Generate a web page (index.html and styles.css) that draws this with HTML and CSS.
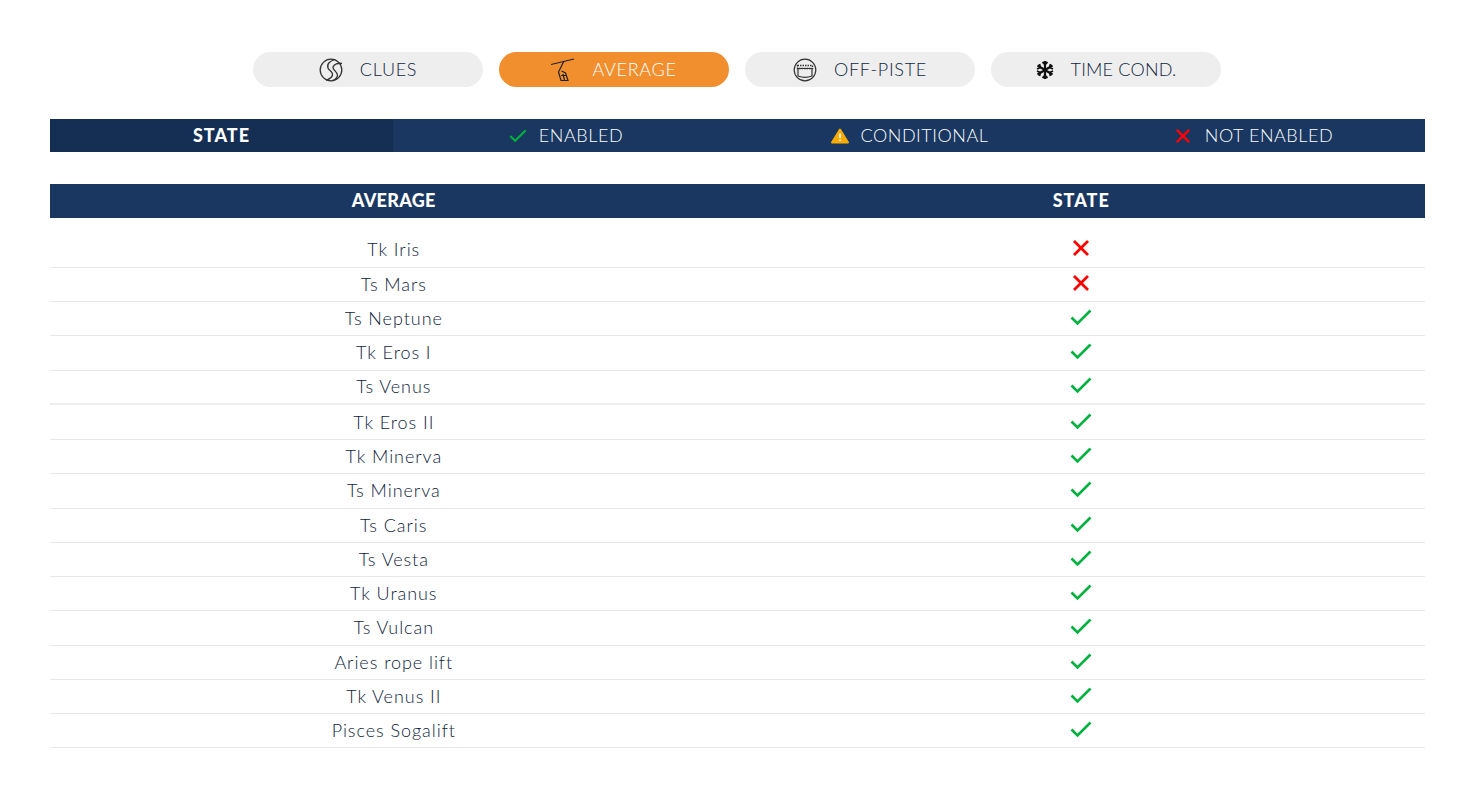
FILE: index.html
```html
<!DOCTYPE html>
<html lang="en">
<head>
<meta charset="utf-8">
<title>Slopes state</title>
<link rel="stylesheet" href="styles.css">
</head>
<body>
<svg class="defs" width="0" height="0" aria-hidden="true">
  <symbol id="check" viewBox="0 0 22 18"><path d="M1.5 9.5 7.5 15.5 20.5 2.5" fill="none" stroke="currentColor" stroke-width="2.6"/></symbol>
  <symbol id="cross" viewBox="0 0 18 18"><path d="M2 2 16 16M16 2 2 16" fill="none" stroke="currentColor" stroke-width="2.8"/></symbol>
</svg>
<nav class="tabs">
  <a class="tab"><svg class="tab-icon" viewBox="0 0 24 24"><circle cx="12" cy="12" r="10.8" fill="none" stroke="#333" stroke-width="1.3"/><path d="M16 1.500C11 3 7.500 6 9 10c1.200 3 4 3 4.500 6 .5 3-3 5-6.500 6.500M23 5.500c-4-.8-8 .5-9 3.500-.8 2.500 4.500 5 4.500 8 0 2-1.500 4-4 5.500" fill="none" stroke="#333" stroke-width="1.300"/></svg><span>CLUES</span></a>
  <a class="tab active"><svg class="tab-icon" viewBox="0 0 24 24"><path d="M0 6.500 23 1" stroke="#222" stroke-width="1.100"/><path d="M13 3 9 11 7.500 14 10 22.500h7L14.500 15 10.500 13M10 17.500h5.500M12 16l1.500 6" fill="none" stroke="#222" stroke-width="1.200"/></svg><span>AVERAGE</span></a>
  <a class="tab"><svg class="tab-icon" viewBox="0 0 24 24"><circle cx="12" cy="12" r="10.800" fill="none" stroke="#333" stroke-width="1.200"/><path d="M4.500 10.500h15M5 10.500v7.500c4 1.500 10 1.500 14 0v-7.500" fill="none" stroke="#333" stroke-width="1.200"/><path d="M4.500 7.500h15v3h-15z" fill="none" stroke="#333" stroke-width="1.400" stroke-dasharray="1.500 1"/></svg><span>OFF-PISTE</span></a>
  <a class="tab tab-time"><svg class="tab-icon snow" viewBox="0 0 18 20"><path d="M9 1v18M1.500 5.500l15 9M16.500 5.500l-15 9" stroke="#111" stroke-width="2.200" fill="none"/><path d="M6.500 2 9 4.500 11.500 2M6.500 18 9 15.500 11.500 18M1 9l3.300-1.500L3.500 4M17 9l-3.300-1.500.8-3.500M1 11l3.300 1.500-.8 3.500M17 11l-3.300 1.500.8 3.500" stroke="#111" stroke-width="1.800" fill="none"/></svg><span>TIME COND.</span></a>
</nav>

<div class="legend">
  <div class="legend-title">STATE</div>
  <div class="legend-item"><svg class="legend-icon"><use href="#check"/></svg><span>ENABLED</span></div>
  <div class="legend-item"><svg class="legend-warn" viewBox="0 0 18 16"><path d="M9 1.500 17 14.500H1z" fill="#f9ab00" stroke="#f9ab00" stroke-width="2" stroke-linejoin="round"/><path d="M9 5.500v4.500M9 11.500v1.500" stroke="#fff" stroke-width="1.600"/></svg><span>CONDITIONAL</span></div>
  <div class="legend-item"><svg class="legend-x"><use href="#cross"/></svg><span>NOT ENABLED</span></div>
</div>

<table class="lifts">
  <thead><tr><th>AVERAGE</th><th class="state-head">STATE</th></tr></thead>
  <tbody>
    <tr><td>Tk Iris</td><td><svg class="no"><use href="#cross"/></svg></td></tr>
    <tr><td>Ts Mars</td><td><svg class="no"><use href="#cross"/></svg></td></tr>
    <tr><td>Ts Neptune</td><td><svg class="yes"><use href="#check"/></svg></td></tr>
    <tr><td>Tk Eros I</td><td><svg class="yes"><use href="#check"/></svg></td></tr>
    <tr class="heavy"><td>Ts Venus</td><td><svg class="yes"><use href="#check"/></svg></td></tr>
    <tr class="tall"><td>Tk Eros II</td><td><svg class="yes"><use href="#check"/></svg></td></tr>
    <tr><td>Tk Minerva</td><td><svg class="yes"><use href="#check"/></svg></td></tr>
    <tr><td>Ts Minerva</td><td><svg class="yes"><use href="#check"/></svg></td></tr>
    <tr><td>Ts Caris</td><td><svg class="yes"><use href="#check"/></svg></td></tr>
    <tr><td>Ts Vesta</td><td><svg class="yes"><use href="#check"/></svg></td></tr>
    <tr><td>Tk Uranus</td><td><svg class="yes"><use href="#check"/></svg></td></tr>
    <tr><td>Ts Vulcan</td><td><svg class="yes"><use href="#check"/></svg></td></tr>
    <tr><td>Aries rope lift</td><td><svg class="yes"><use href="#check"/></svg></td></tr>
    <tr><td>Tk Venus II</td><td><svg class="yes"><use href="#check"/></svg></td></tr>
    <tr><td>Pisces Sogalift</td><td><svg class="yes"><use href="#check"/></svg></td></tr>
  </tbody>
</table>
</body>
</html>
```
FILE: styles.css
```css
* { box-sizing: border-box; }
html, body { margin: 0; background: #fff; }
body {
  padding: 52px 49px 0 50px;
  font-family: "Lato", "Open Sans", sans-serif;
  color: #333;
  font-size: 18px;
}
.defs { position: absolute; }
.tabs { display: flex; justify-content: center; gap: 16px; padding-right: 1px; }
.tab {
  width: 230px; height: 35px;
  padding-bottom: 2px;
  border-radius: 18px;
  background: #eee;
  display: flex; align-items: center; justify-content: center; gap: 17px;
  color: #10253f;
  letter-spacing: .7px;
  font-weight: 300;
}
.tab.active { background: #f18f2f; color: #fff; }
.tab.tab-time { letter-spacing: .2px; }
.tab-icon { width: 24px; height: 24px; flex: none; margin-top: 2px; }
.tab-icon.snow { width: 18px; height: 20px; }
.legend {
  margin-top: 32px;
  height: 33px;
  display: grid;
  grid-template-columns: 343px repeat(3, 1fr);
  background: #193760;
  color: #fff;
}
.legend-title {
  background: #142e54;
  font-weight: 900;
  letter-spacing: 1px;
  padding-bottom: 2px;
  display: flex; align-items: center; justify-content: center;
}
.legend-item { display: flex; align-items: center; justify-content: center; gap: 12px; letter-spacing: .55px; font-weight: 300; padding: 0 0 2px 2px; }
.legend-icon { width: 18px; height: 15px; color: #00b140; margin-top: 2px; }
.legend-warn { width: 18px; height: 16px; margin-right: -1px; margin-top: 2px; }
.legend-x { width: 16px; height: 16px; color: #f00; margin-right: 2px; margin-top: 2px; }
.lifts { margin-top: 32px; width: 100%; border-collapse: collapse; table-layout: fixed; }
.lifts th {
  height: 34px; padding: 0 0 2px;
  background: #193760; color: #fff;
  font-size: 18px; font-weight: 900;
  letter-spacing: .3px;
}
.lifts th.state-head { letter-spacing: 1px; }
.lifts tbody::before { content: ""; display: block; height: 15px; }
.lifts td {
  height: 34.25px; padding: 0 0 .875px;
  text-align: center;
  border-bottom: 1px solid #e8e8e8;
  letter-spacing: .95px;
  font-weight: 300;
  color: #0f2440;
}
.lifts tr.heavy td { border-bottom: 2px solid #eee; }
.lifts tr.tall td { height: 35.25px; }
.lifts svg { display: block; margin: -2px auto 0; }
.no { width: 18px; height: 18px; color: #f00; }
.yes { width: 22px; height: 18px; color: #00b140; }
```
